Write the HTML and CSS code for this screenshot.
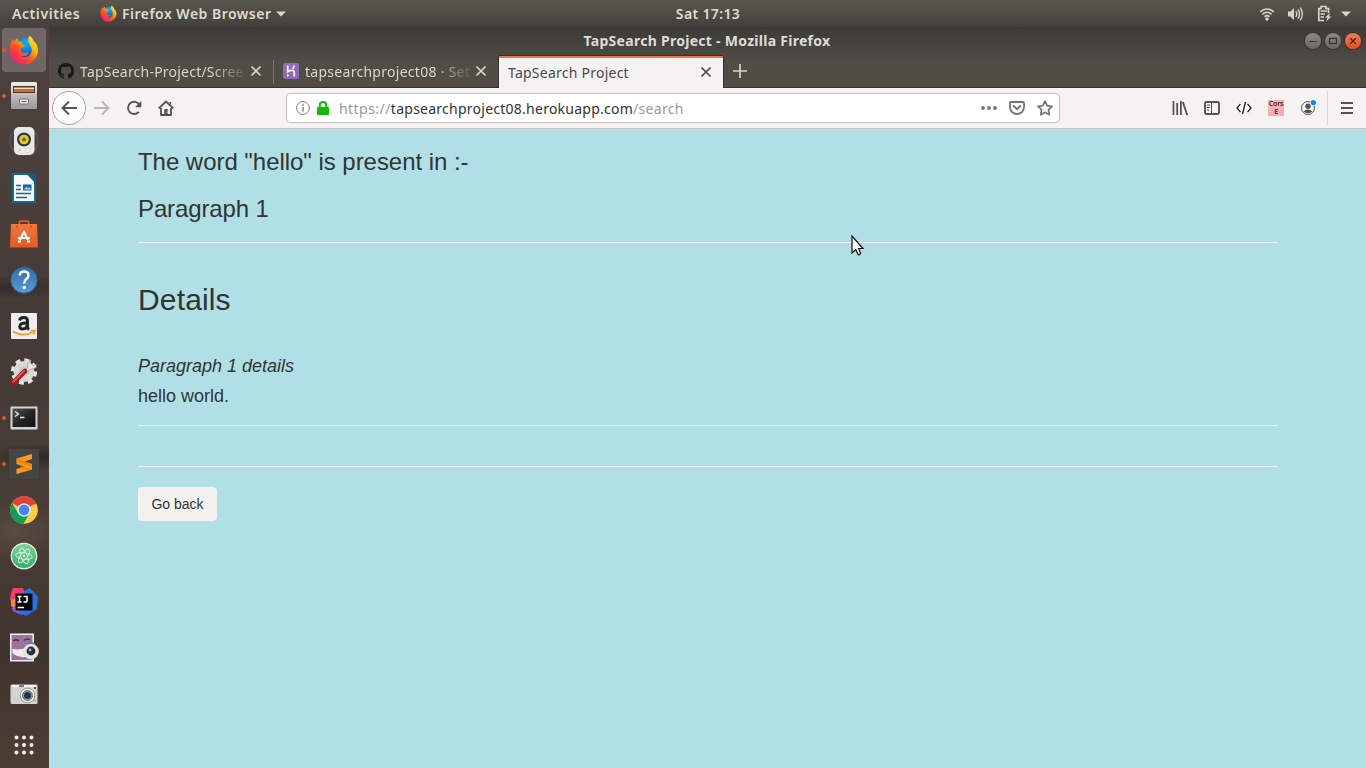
FILE: index.html
```html
<!DOCTYPE html>
<html lang="en">
<head>
<meta charset="utf-8">
<title>TapSearch Project</title>
<link rel="stylesheet" href="styles.css">
</head>
<body>
<svg class="defs" width="0" height="0">
  <defs>
    <linearGradient id="ff-ring" x1="0.9" y1="0" x2="0.15" y2="0.9"><stop offset="0" stop-color="#fff04a"/><stop offset=".35" stop-color="#ffb400"/><stop offset=".6" stop-color="#ff5a1c"/><stop offset="1" stop-color="#f0187a"/></linearGradient>
    <radialGradient id="ff-globe" cx=".55" cy=".2" r=".9"><stop offset="0" stop-color="#00b9f5"/><stop offset=".6" stop-color="#0668d8"/><stop offset="1" stop-color="#282a80"/></radialGradient>
    <linearGradient id="metal" x1="0" y1="0" x2="0" y2="1"><stop offset="0" stop-color="#eee"/><stop offset="1" stop-color="#9a9a98"/></linearGradient>
    <linearGradient id="drawer" x1="0" y1="0" x2="0" y2="1"><stop offset="0" stop-color="#c4c3c1"/><stop offset="1" stop-color="#9a9998"/></linearGradient>
    <linearGradient id="bag" x1="0" y1="0" x2="0" y2="1"><stop offset="0" stop-color="#f4773c"/><stop offset="1" stop-color="#e35a22"/></linearGradient>
    <linearGradient id="help" x1="0" y1="0" x2="0" y2="1"><stop offset="0" stop-color="#2f6aaa"/><stop offset="1" stop-color="#5b9bd5"/></linearGradient>
    <linearGradient id="atom" x1="0" y1="0" x2="0" y2="1"><stop offset="0" stop-color="#7cd694"/><stop offset="1" stop-color="#33ab6b"/></linearGradient>
    <linearGradient id="term" x1="0" y1="0" x2="1" y2="1"><stop offset="0" stop-color="#555"/><stop offset=".5" stop-color="#252525"/><stop offset="1" stop-color="#111"/></linearGradient>
    <symbol id="firefox" viewBox="0 0 30 30">
      <circle cx="16" cy="14" r="11" fill="url(#ff-globe)"/>
      <path fill="url(#ff-ring)" d="M20 .8C23 2 24 4.500 25 6.500C27.500 8 29 12 29 15.500C29 23 22.800 29.600 15 29.600C7 29.600 .9 23.500 .9 15.500C.9 11 1.700 6 3.800 4L5 6.600C6 5 7.500 3.500 8.800 3.200L9 6.300C10.500 6 12.500 6.600 13.600 7.800C12.500 8.500 14 10 15.800 10.300C15.500 12 13.200 12.500 12.300 13.800C11 16 13 18 15.500 18C17.200 18 18 16.600 19.300 17.400C18.800 20 15 21.800 12 20.800C15 23.500 20 22 22 18.500C24 14 21.500 11.500 20 8.500C18.900 6 19 3 20 .8Z"/>
    </symbol>
    <symbol id="close" viewBox="0 0 12 12"><path d="M1.500 1.500L10.500 10.500M10.500 1.500L1.500 10.500" fill="none" stroke="currentColor" stroke-width="1.700"/></symbol>
  </defs>
</svg>

<header class="topbar">
  <div class="topbar-left">
    <span class="activities">Activities</span>
    <svg class="app-icon" width="17" height="17"><use href="#firefox"/></svg>
    <span class="app-name">Firefox Web Browser</span>
    <svg width="10" height="6" viewBox="0 0 10 6"><path d="M0 .5H10L5 5.500Z" fill="#d8d5ce"/></svg>
  </div>
  <span class="clock">Sat 17:13</span>
  <div class="status">
    <svg width="16" height="16" viewBox="0 0 16 16" fill="none" stroke="#d8d5ce"><path d="M1 6Q8 0 15 6M3.300 8.300Q8 4.200 12.700 8.300M5.400 10.600Q8 8.500 10.600 10.600" stroke-width="1.600"/><circle cx="8" cy="13" r="1.800" fill="#d8d5ce" stroke="none"/></svg>
    <svg width="17" height="16" viewBox="0 0 17 16"><path d="M1 5.500H3.500L7 2V14L3.500 10.500H1Z" fill="#d8d5ce"/><path d="M8.800 5Q10.700 8 8.800 11M11 3.300Q14 8 11 12.700M13.300 1.600Q17.500 8 13.300 14.400" fill="none" stroke="#d8d5ce" stroke-width="1.400"/></svg>
    <svg width="16" height="17" viewBox="0 0 16 17"><path d="M8 15.500H2.800V3.500H5V1.500H10V3.500H12.500V8M4.500 6H11M4.500 9H9M4.500 12H8" fill="none" stroke="#d8d5ce" stroke-width="1.700"/><path d="M14 8L9 12.500H11.500L10 16.500L15.500 11.500H13Z" fill="#d8d5ce"/></svg>
    <svg class="status-arrow" width="10" height="6" viewBox="0 0 10 6"><path d="M0 .5H10L5 5.500Z" fill="#d8d5ce"/></svg>
  </div>
</header>

<div class="desktop">
  <nav class="dock">
    <div class="dock-item running active"><svg width="30" height="30"><use href="#firefox"/></svg></div>
    <div class="dock-item running"><svg width="28" height="30" viewBox="0 0 28 30"><rect x="1" y="1" width="26" height="27" rx="1.500" fill="url(#metal)"/><path d="M3 5H25V12H3Z" fill="#4a3428"/><path d="M4 6.500H24V8.500H4Z" fill="#f6dcc0"/><path d="M4 8H24V11H4Z" fill="#d9692f"/><path d="M1.500 12H26.500V27.500H1.500Z" fill="url(#drawer)"/><rect x="9.500" y="18" width="9" height="5" rx="1.200" fill="#eee" stroke="#6e6e6e"/><path d="M11.500 20.500H16.500" stroke="#555"/></svg></div>
    <div class="dock-item"><svg width="32" height="30" viewBox="0 0 32 30"><circle cx="16" cy="14" r="14" fill="none" stroke="#557297" stroke-width="2" opacity=".35"/><rect x="6" y="0" width="20.500" height="28" rx="5" fill="#e8e8e6"/><circle cx="16" cy="12.500" r="7" fill="#343838"/><circle cx="16" cy="12.500" r="4.800" fill="#e3ca2d"/><circle cx="16" cy="12.500" r="2" fill="#706c2a"/><circle cx="20" cy="23" r="2.300" fill="#fff" stroke="#ccc"/><circle cx="11.500" cy="23" r="1" fill="#bbb"/></svg></div>
    <div class="dock-item"><svg width="26" height="30" viewBox="0 0 26 30"><path d="M2 1H17L24 8.500V29H2Z" fill="#f7fafc" stroke="#17659b" stroke-width="2"/><path d="M16 0L25 9V0Z" fill="#0c5b91"/><path d="M5 12.500H10M5 16.500H10M5 20.500H20M5 24.500H16" stroke="#17659b" stroke-width="1.600"/><rect x="12" y="11.500" width="8.500" height="6" fill="#17659b"/><path d="M13 16.500L15.500 13.500L17 15L18.500 14L20 16.500" fill="#9dd0ee"/></svg></div>
    <div class="dock-item"><svg width="28" height="30" viewBox="0 0 28 30"><path d="M9.500 9V3.500Q9.500 2 11 2H17Q18.500 2 18.500 3.500V9" fill="none" stroke="#e8622b" stroke-width="1.600"/><path d="M1 5H27L28 28.500H0Z" fill="url(#bag)"/><path d="M7 6V9M21 6V9" stroke="#c44618"/><path d="M8 22.500H11M17 22.500H20M9.800 21L14 13L18.200 21M8 19H20" fill="none" stroke="#fff" stroke-width="2"/></svg></div>
    <div class="dock-item"><svg width="28" height="28" viewBox="0 0 28 28"><circle cx="14" cy="14" r="13.300" fill="url(#help)" stroke="#2a5789"/><path d="M9.800 9.500Q9.800 5.500 14 5.500Q18.400 5.500 18.400 9.200Q18.400 11.500 16.400 13Q14.200 14.700 14.200 17.500" fill="none" stroke="#fff" stroke-width="2.500"/><circle cx="14.200" cy="21.500" r="1.700" fill="#fff"/></svg></div>
    <div class="dock-item"><svg width="26" height="26" viewBox="0 0 26 26"><rect width="26" height="26" rx="1" fill="#eee"/><path d="M8.500 7.500Q9 4.500 13 4.500Q16.500 4.500 16.500 8V13.500Q16.500 15.500 18 16.500M16 10Q8.800 9.500 8.800 13.500Q8.800 16 11.500 16Q16.500 16 16.300 10" fill="none" stroke="#222" stroke-width="2.900"/><path d="M2 18.500Q12.500 24.500 22 19" fill="none" stroke="#f59a20" stroke-width="1.700"/><path d="M19.500 17.700L24 17.500L22.500 21.500" fill="none" stroke="#f59a20" stroke-width="1.400"/></svg></div>
    <div class="dock-item"><svg width="30" height="30" viewBox="0 0 30 30"><circle cx="15" cy="14.500" r="10.500" fill="#d8d8d5"/><circle cx="15" cy="14.500" r="11.500" fill="none" stroke="#e5e5e2" stroke-width="3.400" stroke-dasharray="5 4.030"/><circle cx="15" cy="14.500" r="5" fill="#c9c8c6"/><path d="M15 14.500L19 10Q17.500 5 22 2.800L21.500 6L24 8.500L27.500 7.500Q27.500 12 21 12.500L17.500 17Z" fill="#e8e8e8" stroke="#888" stroke-width=".6"/><path d="M4 26L16 14" stroke="#a9181c" stroke-width="4.800" stroke-linecap="round"/><path d="M4 25L15 14" stroke="#df5357" stroke-width="1.800" stroke-linecap="round"/></svg></div>
    <div class="dock-item running"><svg width="28" height="24" viewBox="0 0 28 24"><rect x=".5" y=".5" width="27" height="23" rx="1" fill="#d4d4d1" stroke="#8d8d8a"/><rect x="2.500" y="2.500" width="23" height="18.500" fill="url(#term)"/><path d="M5 5.500L8.500 8L5 10.500M10 11.500H14.500" fill="none" stroke="#eee" stroke-width="1.300"/></svg></div>
    <div class="dock-item running"><svg width="30" height="30" viewBox="0 0 30 30"><rect width="30" height="30" rx="1.500" fill="#444646"/><path d="M7.500 9.500L23 5V10L15.500 12.500L23 15V20.500L7.500 25V20L15 17.500L7.500 15Z" fill="#ff9a18"/><path d="M7.500 9.500L23 15V18L7.500 13ZM13 17L23 20.500L20 21.500L11 18.700Z" fill="#e57d0c" opacity=".7"/></svg></div>
    <div class="dock-item"><svg width="28" height="28" viewBox="0 0 28 28"><circle cx="14" cy="14" r="13.800" fill="#ffcd42"/><path d="M14 14L2 7A13.800 13.800 0 0 1 26 7Z" fill="#db4437"/><path d="M14 7.500H26.200" stroke="#db4437" stroke-width="1.500"/><path d="M2 7A13.800 13.800 0 0 0 13.500 27.800L19.600 17.200L14 14L8.400 17.500Z" fill="#0f9d58"/><circle cx="14" cy="14" r="6.700" fill="#f4f4f4"/><circle cx="14" cy="14" r="5.400" fill="#4285f4"/></svg></div>
    <div class="dock-item"><svg width="28" height="28" viewBox="0 0 28 28"><circle cx="14" cy="14" r="12.700" fill="url(#atom)" stroke="#e8f2e9" stroke-width="1.200"/><g fill="none" stroke="#e3f8ea" stroke-width=".9"><ellipse cx="14" cy="14" rx="3.200" ry="8.300" transform="rotate(-22 14 14)"/><ellipse cx="14" cy="14" rx="3.200" ry="8.300" transform="rotate(38 14 14)"/><ellipse cx="14" cy="14" rx="3.200" ry="8.300" transform="rotate(98 14 14)"/></g><circle cx="14" cy="14" r="1.100" fill="#fff"/></svg></div>
    <div class="dock-item"><svg width="28" height="28" viewBox="0 0 28 28"><path d="M1 5L3 0H13L15 5L8 23L1 18L3 14L0 12Z" fill="#f83a70"/><path d="M1 12L7 10V20L1 18Z" fill="#f8893b"/><path d="M2 20L8 16L12 27L3 23Z" fill="#a45be0"/><path d="M14 3L20 0L28 9L27 21L16 28L9 25Z" fill="#2272ee"/><rect x="5.500" y="5.500" width="17" height="17" fill="#080808"/><path d="M7.500 8.500H11.500M9.500 8.500V14M7.500 14H11.500M13.500 8.500H17V12.500Q17 14 15 14H13.500" fill="none" stroke="#fff" stroke-width="1.600"/><path d="M7.500 19.500H14" stroke="#fff" stroke-width="1.500"/></svg></div>
    <div class="dock-item"><svg width="30" height="30" viewBox="0 0 30 30"><rect x="1" y=".5" width="24" height="28" fill="#f0edef"/><rect x="2.500" y="2" width="21" height="25" fill="#9d729e"/><path d="M4.500 8Q7 5.500 10 8M15 7.500Q18 4.500 21 7" fill="none" stroke="#44284c" stroke-width="1.300"/><path d="M3 16Q12 17.500 20 14V23Q12 26 4 21Z" fill="#eee"/><rect x="18" y="9.500" width="8" height="4" rx="2" fill="#4b78a9"/><circle cx="22" cy="18.500" r="7.800" fill="#e4e4e2"/><circle cx="22" cy="18" r="4.400" fill="#282d35"/><circle cx="21" cy="17" r="1.400" fill="#acbccd"/></svg></div>
    <div class="dock-item"><svg width="28" height="22" viewBox="0 0 28 22"><rect x=".5" y="1.500" width="27" height="19.500" rx="1.200" fill="#d4d3d1"/><path d="M2 3H26" stroke="#f4f4f3" stroke-width="2"/><rect x="9" y="2" width="5" height="2" fill="#777"/><circle cx="17.500" cy="12.500" r="7.300" fill="#eee" stroke="#999"/><circle cx="17.500" cy="12.500" r="5" fill="#8a8d90" stroke="#777"/><circle cx="17.500" cy="12.500" r="3.300" fill="#23272d"/><circle cx="17.500" cy="12.500" r="1.800" fill="#133f77"/><circle cx="25" cy="17.500" r="1.200" fill="#f2a43b"/><circle cx="25" cy="5" r="1" fill="#222"/></svg></div>
    <div class="dock-item apps"><svg width="20" height="20" viewBox="0 0 20 20" fill="#f4f2f1"><circle cx="2.500" cy="2.500" r="2"/><circle cx="10" cy="2.500" r="2"/><circle cx="17.500" cy="2.500" r="2"/><circle cx="2.500" cy="10" r="2"/><circle cx="10" cy="10" r="2"/><circle cx="17.500" cy="10" r="2"/><circle cx="2.500" cy="17.500" r="2"/><circle cx="10" cy="17.500" r="2"/><circle cx="17.500" cy="17.500" r="2"/></svg></div>
  </nav>

  <main class="window">
    <div class="titlebar">
      <span class="window-title">TapSearch Project - Mozilla Firefox</span>
      <div class="window-buttons">
        <span class="win-btn"><svg width="10" height="10" viewBox="0 0 10 10"><path d="M1 5.500H9" stroke="#35342f"/></svg></span>
        <span class="win-btn"><svg width="10" height="10" viewBox="0 0 10 10"><rect x="1.500" y="2.500" width="7" height="5" fill="none" stroke="#35342f" stroke-width="1.200"/></svg></span>
        <span class="win-btn win-close"><svg width="10" height="10" viewBox="0 0 10 10"><path d="M2.300 2.300L7.700 7.700M7.700 2.300L2.300 7.700" stroke="#40261b" stroke-width="1.300"/></svg></span>
      </div>
    </div>

    <div class="tabs">
      <div class="tab">
        <svg class="favicon" width="16" height="16" viewBox="0 0 16 16"><path fill="#191717" d="M8 0C3.580 0 0 3.580 0 8c0 3.540 2.290 6.530 5.470 7.590.4.070.55-.17.55-.38 0-.19-.01-.82-.01-1.490-2.010.37-2.530-.49-2.690-.94-.09-.23-.48-.94-.82-1.130-.28-.15-.68-.52-.01-.53.63-.01 1.080.58 1.230.82.72 1.210 1.870.87 2.330.66.07-.52.28-.87.51-1.070-1.780-.2-3.640-.89-3.640-3.950 0-.87.31-1.590.82-2.150-.08-.2-.36-1.020.08-2.120 0 0 .67-.21 2.200.82.64-.18 1.320-.27 2-.27s1.360.09 2 .27c1.530-1.040 2.200-.82 2.200-.82.44 1.100.16 1.920.08 2.120.51.56.82 1.270.82 2.150 0 3.070-1.870 3.750-3.650 3.950.29.25.54.73.54 1.480 0 1.070-.01 1.930-.01 2.200 0 .21.15.46.55.38A8 8 0 0 0 16 8c0-4.420-3.580-8-8-8Z"/></svg>
        <span class="tab-label fade label-github">TapSearch-Project/Scree</span>
        <svg class="tab-close" width="12" height="12"><use href="#close"/></svg>
      </div>
      <div class="tab tab-second">
        <svg class="favicon" width="16" height="16" viewBox="0 0 16 16"><rect width="16" height="16" rx="2" fill="#8e6bb8"/><path d="M4.700 2.500V8.700Q8 7 10 7.500Q11.300 8 11.300 9.500V13.500M11.200 2.500Q11 4.500 9.500 5.800" fill="none" stroke="#fff" stroke-width="1.700"/><path d="M4 10.500L6.200 12.200L4 14Z" fill="#fff"/></svg>
        <span class="tab-label fade label-heroku">tapsearchproject08 · Set</span>
        <svg class="tab-close" width="12" height="12"><use href="#close"/></svg>
      </div>
      <div class="tab tab-active">
        <span class="tab-label label-current">TapSearch Project</span>
        <svg class="tab-close" width="12" height="12"><use href="#close"/></svg>
      </div>
      <svg class="new-tab" width="14" height="14" viewBox="0 0 14 14"><path d="M7 0V14M0 7H14" stroke="#d4d2cd" stroke-width="1.700"/></svg>
    </div>

    <div class="toolbar">
      <div class="nav-buttons">
        <span class="back"><svg width="16" height="16" viewBox="0 0 16 16"><path d="M16 8H1.500M8 1.500L1.500 8L8 14.500" fill="none" stroke="#55534f" stroke-width="1.900"/></svg></span>
        <svg class="forward" width="16" height="16" viewBox="0 0 16 16"><path d="M0 8H14.500M8 1.500L14.500 8L8 14.500" fill="none" stroke="#b8b6b2" stroke-width="1.900"/></svg>
        <svg class="reload" width="16" height="16" viewBox="0 0 16 16"><path d="M13.300 4.700A6.100 6.100 0 1 0 12.800 11.800" fill="none" stroke="#55534f" stroke-width="1.900"/><path d="M15.300 1V7.200H9.100Z" fill="#55534f"/></svg>
        <svg class="home" width="16" height="16" viewBox="0 0 16 16"><path d="M.7 8.300L8 1.500L15.300 8.300M3 8V15H13V8" fill="none" stroke="#55534f" stroke-width="1.800" stroke-linejoin="round"/><path d="M6.300 15V9H9.700V15M11 2H13V5" fill="#55534f"/><circle cx="9" cy="12" r=".6" fill="#fff"/></svg>
      </div>
      <div class="urlbar">
        <svg width="14" height="14" viewBox="0 0 14 14"><circle cx="7" cy="7" r="6.400" fill="none" stroke="#807e7b"/><path d="M7 6V10.500M7 3.300V5" stroke="#807e7b" stroke-width="1.500"/></svg>
        <svg class="lock" width="12" height="14" viewBox="0 0 12 14"><rect y="6" width="12" height="8" rx="1" fill="#12bc00"/><path d="M2.800 7V4.200Q2.800 1 6 1Q9.200 1 9.200 4.200V7" fill="none" stroke="#12bc00" stroke-width="2"/></svg>
        <span class="url"><span class="scheme">https://</span><span class="domain">tapsearchproject08.herokuapp.com</span>/search</span>
        <svg class="dots" width="16" height="4" viewBox="0 0 16 4" fill="#777572"><circle cx="2" cy="2" r="1.900"/><circle cx="8" cy="2" r="1.900"/><circle cx="14" cy="2" r="1.900"/></svg>
        <svg class="pocket" width="16" height="14" viewBox="0 0 16 14"><path d="M1.900 1H14.100Q15 1 15 1.900V6Q15 9 13 11Q10.800 13 8 13Q5.200 13 3 11Q1 9 1 6V1.900Q1 1 1.900 1Z" fill="none" stroke="#777572" stroke-width="1.800"/><path d="M4.700 5L8 8.200L11.300 5" fill="none" stroke="#777572" stroke-width="1.900" stroke-linecap="round"/></svg>
        <svg class="star" width="16" height="16" viewBox="0 0 16 16"><path d="M8 1.200L10.100 5.700L15 6.300L11.400 9.700L12.300 14.700L8 12.200L3.700 14.700L4.600 9.700L1 6.300L5.900 5.700Z" fill="none" stroke="#777572" stroke-width="1.700" stroke-linejoin="round"/></svg>
      </div>
      <div class="tools">
        <svg width="16" height="16" viewBox="0 0 16 16"><path d="M1.500 1V15M5.200 3V15M8.900 1V15M10.800 2L15.200 15" fill="none" stroke="#55534f" stroke-width="1.800"/></svg>
        <svg width="16" height="16" viewBox="0 0 16 16"><rect x="1" y="2" width="14" height="12" rx="1.500" fill="none" stroke="#55534f" stroke-width="1.900"/><path d="M7.500 2V14" stroke="#55534f"/><path d="M3 5H6M3 7.500H6M3 10H5" stroke="#55534f"/></svg>
        <svg width="16" height="16" viewBox="0 0 16 16"><path d="M4.500 3.800L1 8L4.500 12.200M11.500 3.800L15 8L11.500 12.200M9.500 2L6.500 14" fill="none" stroke="#1a1a1a" stroke-width="1.300"/></svg>
        <span class="cors">Cors<br>E</span>
        <svg width="16" height="16" viewBox="0 0 16 16"><circle cx="8" cy="8" r="6.500" fill="none" stroke="#55534f"/><circle cx="8" cy="6.200" r="2.700" fill="#55534f"/><path d="M3.700 11.500Q5.200 9.500 8 9.500Q10.700 9.500 12.300 11.500Q10.700 13.300 8 13.300Q5.300 13.300 3.700 11.500Z" fill="#55534f"/><circle cx="13.300" cy="2.600" r="3.200" fill="#f4f3f2"/><circle cx="13.300" cy="2.600" r="2.600" fill="#0a84ff"/></svg>
      </div>
      <div class="menu"><svg width="12" height="12" viewBox="0 0 12 12"><path d="M0 1H12M0 6H12M0 11H12" stroke="#55534f" stroke-width="1.900"/></svg></div>
    </div>

    <section class="page">
      <div class="container">
        <h3>The word "hello" is present in :-</h3>
        <h3 class="result">Paragraph 1</h3>
        <hr>
        <h2>Details</h2>
        <h4><em>Paragraph 1 details</em></h4>
        <h4>hello world.</h4>
        <hr class="details-rule">
        <hr class="second-rule">
        <button class="go-back" type="button">Go back</button>
      </div>
    </section>
  </main>
</div>
<svg class="pointer" width="14" height="22" viewBox="0 0 14 22"><path d="M1 1V18L4.800 14.500L7 19.600Q8.500 20.300 9.700 18.500L7.600 13.500H12Z" fill="#fff" stroke="#111" stroke-width="1.200"/></svg>
</body>
</html>
```
FILE: styles.css
```css
* { box-sizing: border-box; }
body {
  margin: 0;
  width: 1366px;
  height: 768px;
  overflow: hidden;
  font-family: "Noto Sans", sans-serif;
  font-size: 14px;
  background: #b0e0e6;
}
svg { display: block; flex: none; }
.defs { position: absolute; }

.topbar {
  display: grid;
  grid-template-columns: 1fr auto 1fr;
  align-items: center;
  height: 27px;
  padding: 0 15px 0 12px;
  background: linear-gradient(#5a574e, #41403a);
  color: #dfdbd2;
  font-weight: 600;
  white-space: nowrap;
}
.topbar-left { display: flex; align-items: center; }
.topbar span { padding-bottom: 1px; }
.activities { width: 88px; letter-spacing: 0.58px; }
.app-name { margin: 0 5px; width: 149px; letter-spacing: 0.48px; }
.clock { padding-left: 49px; margin-right: -4px; letter-spacing: 0.35px; }
.topbar-left, .status { width: 100%; }
.status { display: flex; justify-content: flex-end; align-items: center; gap: 12px; }
.status-arrow { margin-left: -3px; }

.desktop { display: flex; height: 741px; }
.dock {
  width: 49px;
  flex: none;
  background:
    radial-gradient(ellipse 70px 12px at 10px 260px, #352b28, transparent),
    radial-gradient(ellipse 60px 14px at 40px 430px, #302826, transparent),
    radial-gradient(ellipse 50px 30px at 15px 505px, #594b42, transparent),
    linear-gradient(#4d4140, #4a3e39 25%, #453a36 40%, #493d36 65%, #40342e 85%, #4d3e35);
}
.dock-item { height: 46px; display: flex; align-items: center; justify-content: center; padding-right: 1px; position: relative; }
.active::after { content: ""; position: absolute; inset: 1px 3px 1px 2px; border-radius: 4px; background: rgba(255,255,255,.2); }
.active svg { position: relative; z-index: 1; }
.running::before { content: ""; position: absolute; z-index: 2; left: 2px; top: 21px; width: 4px; height: 4px; border-radius: 50%; background: #e95420; }
.apps { height: 51px; padding-top: 4px; }

.window { flex: 1; display: flex; flex-direction: column; min-width: 0; }
.titlebar {
  height: 28px;
  display: flex;
  align-items: center;
  background: linear-gradient(#3c3b37, #4b4942);
  color: #dfdbd2;
  font-weight: 700;
}
.window-title { flex: 1; text-align: center; padding: 0 0 2px 60px; white-space: nowrap; letter-spacing: 0.28px; }
.window-buttons { display: flex; gap: 4px; padding-right: 5px; }
.win-btn { width: 16px; height: 16px; border-radius: 50%; display: flex; align-items: center; justify-content: center; background: linear-gradient(#8a8880, #6a6860); box-shadow: 0 0 0 1px #33322e; }
.win-close { background: linear-gradient(#f37b55, #e3501f); }

.tabs {
  height: 33px;
  display: flex;
  align-items: center;
  background: linear-gradient(#4b4942, #504d46 5px);
  border-bottom: 1px solid #33322e;
}
.tab { display: flex; align-items: center; height: 32px; width: 225px; padding: 0 12px 0 9px; color: #d9d6ce; }
.tab-second { position: relative; }
.tab-second::before { content: ""; position: absolute; left: -1px; top: 5px; width: 1px; height: 24px; background: #77746c; }
.tab-label { flex: 1; white-space: nowrap; margin-left: 6px; }
.label-github { letter-spacing: 0.22px; }
.label-heroku { letter-spacing: 0.28px; }
.label-current { letter-spacing: 0.24px; }
.fade { -webkit-mask-image: linear-gradient(to right, #000 calc(100% - 34px), transparent calc(100% + 4px)); mask-image: linear-gradient(to right, #000 calc(100% - 34px), transparent calc(100% + 4px)); }
.tab-close { margin-left: 5px; }
.tab-active {
  align-self: flex-end;
  width: 224px;
  height: 32px;
  margin-bottom: -1px;
  padding: 0 11px 2px 3px;
  background: #f4f3f2;
  color: #4a4947;
  border-top: 2px solid #f07746;
  box-shadow: -1px 0 #33322e, 1px 0 #33322e, 0 -1px #33322e;
}
.new-tab { margin-left: 10px; }

.toolbar {
  height: 41px;
  display: flex;
  align-items: center;
  background: #f4f3f2;
  border-bottom: 1px solid #c8c5c1;
}
.nav-buttons { display: flex; align-items: center; width: 237px; padding-left: 3px; }
.back { width: 34px; height: 34px; border: 1px solid #aaa7a3; border-radius: 50%; background: #fcfcfb; display: flex; align-items: center; justify-content: center; }
.forward { margin-left: 8px; }
.reload, .home { margin-left: 16px; }
.urlbar {
  width: 774px;
  height: 30px;
  display: flex;
  align-items: center;
  padding: 0 6px 0 9px;
  border: 1px solid #c2bfbb;
  border-radius: 4px;
  background: #fff;
}
.lock { margin-left: 7px; }
.url { flex: 1; margin-left: 10px; color: #9a9996; white-space: nowrap; letter-spacing: 0.3px; }
.scheme { letter-spacing: 0.45px; }
.domain { color: #333; letter-spacing: 0.25px; }
.pocket { margin-left: 12px; }
.star { margin-left: 12px; }
.tools { display: flex; align-items: center; gap: 16px; margin-left: 112px; }
.cors { width: 16px; height: 16px; background: #f6b0b0; font: 600 7px/8px "Noto Sans", sans-serif; text-align: center; letter-spacing: -.2px; color: #4a2020; }
.menu { display: flex; align-items: center; height: 34px; margin-left: 11px; padding-left: 13px; border-left: 1px solid #d8d5d2; }

.page { flex: 1; background: #b0e0e6; overflow: hidden; }
.container {
  width: 1140px;
  margin-left: 89px;
  color: #333;
  font-family: "Liberation Sans", Arial, sans-serif;
}
h2, h3, h4 { font-weight: 400; line-height: 1.1; }
h3 { font-size: 24px; margin: 20px 0 10px; letter-spacing: -0.04px; }
.result { margin: 21px 0 19px; letter-spacing: -0.12px; }
h2 { font-size: 30px; margin: 40px 0 41px; letter-spacing: 0.15px; }
h4 { font-size: 18px; margin: 10px 0; }
hr { border: 0; border-top: 1px solid #eee; margin: 19px 0 20px; }
.second-rule { margin-top: 40px; }
.go-back { width: 79px; height: 34px; padding: 0; border: 0; border-radius: 4px; background: #f2f1f0; color: #333; font: 14px "Liberation Sans", Arial, sans-serif; }

.pointer { position: absolute; left: 851px; top: 235px; }
```
